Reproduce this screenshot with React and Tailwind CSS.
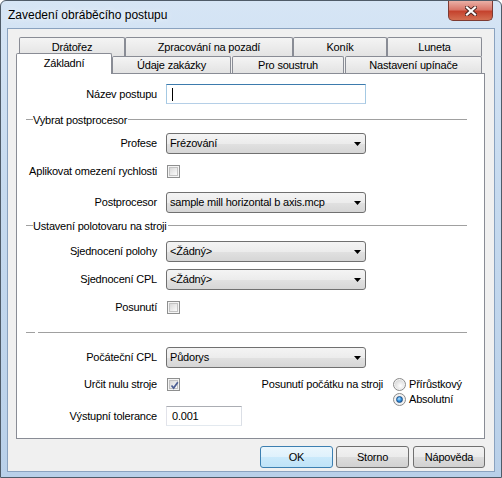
import React from 'react';

const comboBg =
  'bg-[linear-gradient(to_bottom,#f4f4f4_0%,#ececec_50%,#e1e1e1_51%,#d6d6d6_100%)]';

const Combo = ({ value }) => (
  <div
    className={`flex h-[21px] w-[200px] items-center rounded-[3px] border border-[#707070] pl-[3px] pr-[4px] ${comboBg}`}
  >
    <span className="flex-1 truncate leading-[13px]">{value}</span>
    <svg width="7" height="4" viewBox="0 0 7 4">
      <path d="M0 0h7L3.5 4z" fill="#000" />
    </svg>
  </div>
);

const Checkbox = ({ checked }) => (
  <div className="h-[13px] w-[13px] border border-[#8e8f8f] bg-[#f4f4f4] p-[1px]">
    <div className="relative h-full w-full border border-[#c3c3c3] bg-linear-to-br from-[#d9d9d9] to-[#fbfbfb]">
      {checked && (
        <svg className="absolute left-[0px] top-[0px]" width="9" height="9" viewBox="0 0 9 9">
          <path d="M1.5 4.5 L3.6 7 L7.8 1.2" fill="none" stroke="#4d5f94" strokeWidth="1.7" />
        </svg>
      )}
    </div>
  </div>
);

const Radio = ({ checked }) => (
  <div className="flex h-[13px] w-[13px] items-center justify-center rounded-full border border-[#8a8a8a] bg-[#f2f2f2]">
    {checked ? (
      <div className="h-[7px] w-[7px] rounded-full border border-[#1d4f86] bg-[radial-gradient(circle_at_40%_35%,#bfe6ff_0%,#3a9ae6_45%,#0c4d94_100%)]" />
    ) : (
      <div className="h-[9px] w-[9px] rounded-full bg-[radial-gradient(circle_at_60%_65%,#ffffff_0%,#e6e6e6_50%,#cdcdcd_100%)]" />
    )}
  </div>
);

const Row = ({ label, className, children, top }) => (
  <div
    className={`grid grid-cols-[140px_1fr] gap-x-[9px] ${top ? 'items-start' : 'items-center'} ${className}`}
  >
    <div className="text-right leading-[13px]">{label}</div>
    <div className="flex">{children}</div>
  </div>
);

const GroupHeader = ({ title, className }) => (
  <div className={`ml-[9px] mr-[17px] flex h-[14px] items-start ${className}`}>
    <div className="mt-[6px] h-px w-[7px] bg-[#a0a0a0]" />
    <span className="pr-[1px] leading-[14px]">{title}</span>
    <div className="mt-[6px] h-px flex-1 bg-[#a0a0a0]" />
  </div>
);

const TopTab = ({ label, w }) => (
  <div
    className={`flex h-[19px] items-start justify-center rounded-t-[2px] border border-b-0 border-[#898c95] bg-linear-to-b from-[#f4f4f4] to-[#e3e3e3] leading-[18px] ${w}`}
  >
    {label}
  </div>
);

const LowTab = ({ label, w }) => (
  <div
    className={`flex h-[17px] items-start justify-center rounded-t-[2px] border border-b-0 border-[#898c95] bg-linear-to-b from-[#f4f4f4] to-[#e3e3e3] leading-[16px] ${w}`}
  >
    {label}
  </div>
);

const DlgButton = ({ label, primary, className }) => (
  <div
    className={`flex h-[22px] items-center justify-center rounded-[3px] border ${
      primary
        ? 'border-[#3c7fb1] bg-[linear-gradient(to_bottom,#eaf6fd_0%,#dff1fc_50%,#cae9fb_51%,#bfe3f8_100%)]'
        : 'border-[#707070] bg-[linear-gradient(to_bottom,#f2f2f2_0%,#ebebeb_50%,#dddddd_51%,#d1d1d1_100%)]'
    } ${className}`}
  >
    {label}
  </div>
);

export default function App() {
  return (
    <div className="flex h-[478px] w-[502px] flex-col rounded-t-[6px] border border-[#4f5b68] bg-[linear-gradient(to_bottom,#d6e5f5_0%,#c6daef_40%,#b9d0e9_100%)] font-['Liberation_Sans',Arial,sans-serif] text-[11px] text-black">
      {/* title bar */}
      <div className="flex h-[27px] items-start">
        <div className="ml-[7px] pt-[6px] text-[12px] leading-[16px] [text-shadow:0_0_6px_#ffffff]">
          Zavedení obráběcího postupu
        </div>
        <div className="ml-auto mr-[8px] flex h-[20px] w-[45px] items-center justify-center rounded-b-[5px] border border-t-0 border-[#7d3a32] bg-[linear-gradient(to_bottom,#eab0a6_0%,#d9776a_45%,#c5432e_55%,#d36f52_100%)]">
          <svg width="12" height="10" viewBox="0 0 12 10">
            <path d="M2 1.5 L10 8.5 M10 1.5 L2 8.5" stroke="#4a2621" strokeWidth="4" strokeLinecap="square" />
            <path d="M2 1.5 L10 8.5 M10 1.5 L2 8.5" stroke="#ffffff" strokeWidth="2.2" strokeLinecap="square" />
          </svg>
        </div>
      </div>

      {/* client */}
      <div className="ml-[6px] mr-[6px] flex h-[444px] flex-col border border-[#8aa2bf] bg-[#f0f0f0] tracking-[-0.2px]">
        {/* tabs */}
        <div className="ml-[11px] mt-[8px] flex h-[19px]">
          <TopTab label="Drátořez" w="w-[106px]" />
          <TopTab label="Zpracování na pozadí" w="w-[168px]" />
          <TopTab label="Koník" w="w-[94px]" />
          <TopTab label="Luneta" w="w-[95px]" />
        </div>
        <div className="ml-[8px] flex h-[17px] items-end">
          <div className="relative z-10 -mb-px flex h-[21px] w-[96px] items-start justify-center rounded-t-[2px] border border-b-0 border-[#898c95] bg-white pt-[1px] leading-[16px]">
            Základní
          </div>
          <LowTab label="Údaje zakázky" w="w-[119px]" />
          <div className="ml-[1px] flex">
            <LowTab label="Pro soustruh" w="w-[112px]" />
          </div>
          <div className="ml-[1px] flex">
            <LowTab label="Nastavení upínače" w="w-[137px]" />
          </div>
        </div>

        {/* panel */}
        <div className="ml-[8px] flex h-[366px] w-[469px] flex-col border border-[#898c95] bg-white">
          <Row label="Název postupu" className="mt-[10px]">
            <div className="flex h-[20px] w-[200px] items-center border border-[#3d7bad] border-b-[#b5cfe7] border-l-[#a4c9e3] border-r-[#a4c9e3] bg-white pl-[5px]">
              <div className="h-[13px] w-px bg-black" />
            </div>
          </Row>

          <GroupHeader title="Vybrat postprocesor" className="mt-[9px]" />

          <Row label="Profese" className="mt-[6px]">
            <Combo value="Frézování" />
          </Row>
          <Row label="Aplikovat omezení rychlosti" className="mt-[11px]">
            <div className="ml-[1px]">
              <Checkbox />
            </div>
          </Row>
          <Row label="Postprocesor" className="mt-[14px]">
            <Combo value="sample mill horizontal b axis.mcp" />
          </Row>

          <GroupHeader title="Ustavení polotovaru na stroji" className="mt-[6px]" />

          <Row label="Sjednocení polohy" className="mt-[8px]">
            <Combo value="<Žádný>" />
          </Row>
          <Row label="Sjednocení CPL" className="mt-[7px]">
            <Combo value="<Žádný>" />
          </Row>
          <Row label="Posunutí" className="mt-[11px]">
            <div className="ml-[1px]">
              <Checkbox />
            </div>
          </Row>

          <div className="ml-[9px] mr-[17px] mt-[12px] flex h-[14px] items-start">
            <div className="mt-[6px] h-px w-[9px] bg-[#a0a0a0]" />
            <div className="ml-[3px] mt-[6px] h-px flex-1 bg-[#a0a0a0]" />
          </div>

          <Row label="Počáteční CPL" className="mt-[7px]">
            <Combo value="Půdorys" />
          </Row>
          <Row label="Určit nulu stroje" className="mt-[10px]" top>
            <div className="ml-[1px]">
              <Checkbox checked />
            </div>
            <div className="flex-1 pr-[10px] text-right leading-[13px]">Posunutí počátku na stroji</div>
            <div className="flex w-[91px] flex-col gap-[2px]">
              <div className="flex items-center gap-[3px] leading-[13px]">
                <Radio />
                <span>Přírůstkový</span>
              </div>
              <div className="flex items-center gap-[3px] leading-[13px]">
                <Radio checked />
                <span>Absolutní</span>
              </div>
            </div>
          </Row>
          <Row label="Výstupní tolerance">
            <div className="flex h-[20px] w-[76px] items-center border border-[#abadb3] border-b-[#e3e9ef] border-l-[#e2e3ea] border-r-[#dbdfe6] bg-white pl-[5px] leading-[13px]">
              0.001
            </div>
          </Row>
        </div>

        {/* buttons */}
        <div className="mr-[9px] mt-[7px] flex justify-end">
          <DlgButton label="OK" primary className="w-[73px]" />
          <DlgButton label="Storno" className="ml-[3px] w-[73px]" />
          <DlgButton label="Nápověda" className="ml-[4px] w-[72px]" />
        </div>
      </div>
    </div>
  );
}
